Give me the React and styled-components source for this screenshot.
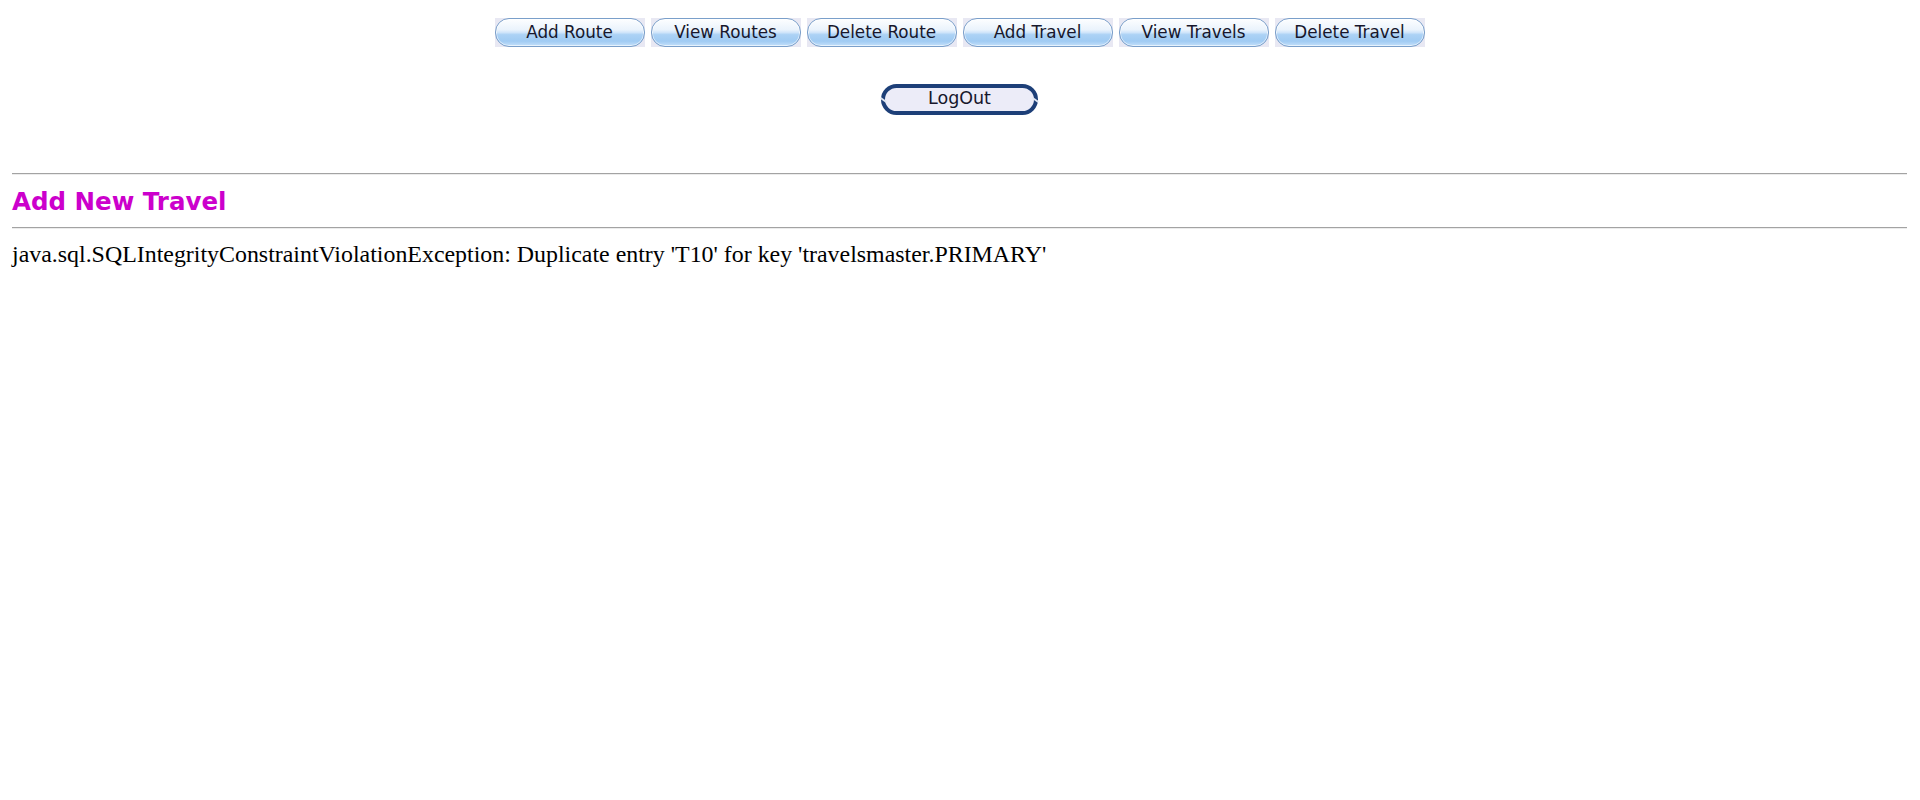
import React from "react";
import styled, { createGlobalStyle } from "styled-components";

const GlobalStyle = createGlobalStyle`
  html, body { margin: 0; padding: 0; background: #ffffff; }
  body { font-family: "Liberation Serif", "Times New Roman", serif; }
`;

const Page = styled.div`
  padding: 18px 13px 40px 12px;
`;

const Nav = styled.nav`
  display: flex;
  justify-content: center;
  gap: 6px;
`;

const NavButton = styled.button`
  width: 150px;
  height: 29px;
  padding: 0;
  margin: 0;
  border: 0;
  background: #e8e8f3;
  cursor: pointer;
  display: flex;
`;

const Pill = styled.span`
  flex: 1;
  display: flex;
  align-items: center;
  justify-content: center;
  border: 1px solid #7a9fca;
  border-radius: 14px;
  box-shadow: inset 0 0 0 1px rgba(255, 255, 255, 0.6);
  background: linear-gradient(
    to bottom,
    #fdfeff 0%,
    #eaf3fc 40%,
    #d0e5fa 50%,
    #acd2f5 58%,
    #a0cbf3 82%,
    #c4e0fa 100%
  );
  font-family: "DejaVu Sans", Verdana, sans-serif;
  font-size: 16.8px;
  color: #17172c;
  padding-bottom: 1px;
  white-space: nowrap;
`;

const LogoutRow = styled.div`
  display: flex;
  justify-content: center;
  margin-top: 37px;
`;

const LogoutButton = styled.button`
  position: relative;
  width: 157px;
  height: 31px;
  margin: 0;
  padding: 0 0 1px;
  border: 4px solid #1d3f78;
  border-radius: 16px;
  background: #ececf8;
  font-family: "DejaVu Sans", Verdana, sans-serif;
  font-size: 17.5px;
  line-height: 1;
  color: #17172c;
  cursor: pointer;

  &::before,
  &::after {
    content: "";
    position: absolute;
    top: 50%;
    width: 7px;
    height: 2px;
    background: #dfe6f2;
    margin-top: -1px;
  }
  &::before {
    left: -5px;
    transform: rotate(35deg);
  }
  &::after {
    right: -5px;
    transform: rotate(35deg);
  }
`;

const Rule = styled.hr`
  margin: 0;
  border: 0;
  border-top: 1px solid #a3a3a3;
  border-bottom: 1px solid #ececec;
  height: 0;
`;

const TopRule = styled(Rule)`
  margin-top: 58px;
`;

const Heading = styled.h2`
  margin: 12px 0 10px;
  font-family: "DejaVu Sans", Verdana, sans-serif;
  font-weight: bold;
  font-size: 24.5px;
  line-height: 30px;
  color: #cc00cc;
`;

const Message = styled.p`
  margin: 11px 0 0;
  font-family: "Liberation Serif", "Times New Roman", serif;
  font-size: 23.9px;
  line-height: 28px;
  color: #000000;
`;

const navItems = [
  "Add Route",
  "View Routes",
  "Delete Route",
  "Add Travel",
  "View Travels",
  "Delete Travel",
];

export default function App() {
  return (
    <>
      <GlobalStyle />
      <Page>
        <Nav>
          {navItems.map((label) => (
            <NavButton key={label} type="button">
              <Pill>{label}</Pill>
            </NavButton>
          ))}
        </Nav>
        <LogoutRow>
          <LogoutButton type="button">LogOut</LogoutButton>
        </LogoutRow>
        <TopRule />
        <Heading>Add New Travel</Heading>
        <Rule />
        <Message>
          java.sql.SQLIntegrityConstraintViolationException: Duplicate entry
          'T10' for key 'travelsmaster.PRIMARY'
        </Message>
      </Page>
    </>
  );
}
